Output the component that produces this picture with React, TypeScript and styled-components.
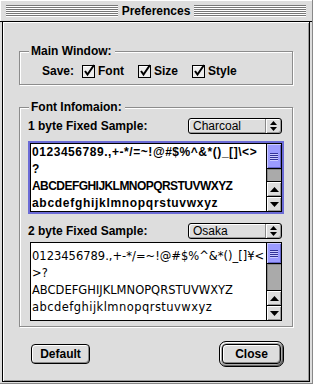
import React, { FC } from "react";
import styled, { createGlobalStyle } from "styled-components";

const GlobalStyle = createGlobalStyle`
  html, body {
    margin: 0;
    padding: 0;
    background: #dddddd;
  }
  body {
    font-family: "Liberation Sans", Arial, sans-serif;
    font-size: 12px;
    color: #000;
  }
`;

const Window = styled.div`
  width: 313px;
  height: 384px;
  box-sizing: border-box;
  background: #dddddd;
  display: flex;
  flex-direction: column;
  border-right: 1px solid #888;
  border-bottom: 1px solid #888;
`;

const TitleBar = styled.div`
  height: 21px;
  flex: none;
  display: flex;
  align-items: center;
  padding: 0 6px 0 6px;
  border-bottom: 1px solid #000;
  background: #dddddd;
  box-shadow: inset 1px 1px 0 #fff;
`;

const Stripes = styled.div`
  flex: 1;
  height: 12px;
  margin-top: 1px;
  background: repeating-linear-gradient(
    to bottom,
    #777 0px,
    #777 1px,
    #fff 1px,
    #fff 2px
  );
`;

const Title = styled.div`
  font-weight: bold;
  font-size: 12px;
  padding: 0 4px;
  white-space: nowrap;
`;

const Panel = styled.div`
  flex: 1;
  margin: 0 2px 1px 2px;
  border: 1px solid #000;
  border-top: none;
  background: #dddddd;
  box-shadow: inset 1px 1px 0 #fff, inset -1px -1px 0 #999;
  display: flex;
  flex-direction: column;
  padding: 29px 16px 0 16px;
`;

const Group = styled.div<{ $height: number; $mt?: number }>`
  position: relative;
  height: ${(p) => p.$height}px;
  margin-top: ${(p) => p.$mt ?? 0}px;
  box-sizing: border-box;
  border: 1px solid #8c8c8c;
  box-shadow: 1px 1px 0 #fff, inset 1px 1px 0 #fff;
`;

const GroupLabel = styled.div`
  position: absolute;
  left: 9px;
  top: -8px;
  padding: 0 3px 0 2px;
  background: #dddddd;
  font-weight: bold;
  line-height: 14px;
`;

const SaveRow = styled.div`
  display: flex;
  align-items: center;
  height: 13px;
  padding: 12px 0 0 22px;
  font-weight: bold;
`;

const SaveLabel = styled.span`
  margin-right: 8px;
`;

const CheckItem = styled.label`
  display: flex;
  align-items: center;
  gap: 2px;
  margin-right: 14px;
`;

const GroupBody = styled.div`
  display: flex;
  flex-direction: column;
  padding: 10px 10px 0 10px;
`;

const SampleRow = styled.div<{ $mt?: number }>`
  display: flex;
  align-items: center;
  justify-content: space-between;
  height: 16px;
  margin-top: ${(p) => p.$mt ?? 0}px;
  font-weight: bold;
`;

const SampleLabel = styled.span`
  margin-left: -2px;
`;

const Popup = styled.div`
  width: 94px;
  height: 16px;
  box-sizing: border-box;
  border: 1px solid #000;
  border-radius: 3px;
  background: #dddddd;
  box-shadow: inset 1px 1px 0 #fff, inset -1px -1px 0 #999;
  display: flex;
  align-items: stretch;
  font-family: "Liberation Sans Narrow", "Liberation Sans", Arial, sans-serif;
  font-weight: normal;
  font-size: 12px;
`;

const PopupText = styled.div`
  flex: 1;
  padding-left: 4px;
  line-height: 14px;
`;

const PopupArrows = styled.div`
  width: 15px;
  border-left: 1px solid #888;
  box-shadow: inset 1px 0 0 #fff;
  display: flex;
  align-items: center;
  justify-content: center;
`;

const TextBox = styled.div<{ $focused?: boolean; $mt: number; $height: number }>`
  margin-top: ${(p) => p.$mt}px;
  height: ${(p) => p.$height}px;
  box-sizing: border-box;
  border: 1px solid #000;
  background: #fff;
  display: flex;
  box-shadow: ${(p) => (p.$focused ? "0 0 0 2px #6b6bd6" : "none")};
`;

const TextArea = styled.div<{ $osaka?: boolean; $pt: number }>`
  flex: 1;
  overflow: hidden;
  padding: ${(p) => p.$pt}px 0 0 1px;
  line-height: 17px;
  white-space: nowrap;
  font-family: ${(p) =>
    p.$osaka ? '"DejaVu Sans", sans-serif' : '"Liberation Sans", Arial, sans-serif'};
  font-weight: ${(p) => (p.$osaka ? "normal" : "bold")};
  font-size: ${(p) => (p.$osaka ? "11.5px" : "12px")};
`;

const Line = styled.div<{ $spacing: number }>`
  letter-spacing: ${(p) => p.$spacing}px;
`;

const ScrollBar = styled.div`
  width: 14px;
  border-left: 1px solid #000;
  display: flex;
  flex-direction: column;
`;

const Thumb = styled.div<{ $h: number }>`
  height: ${(p) => p.$h}px;
  flex: none;
  background: #9c9cff;
  border-bottom: 1px solid #000;
  box-shadow: inset 1px 1px 0 #ccccff, inset -1px -1px 0 #6666cc;
  display: flex;
  flex-direction: column;
  align-items: center;
  justify-content: center;
  gap: 1px;
`;

const Grip = styled.div`
  width: 8px;
  height: 1px;
  background: #333399;
  box-shadow: 0 1px 0 #ccccff;
`;

const Track = styled.div`
  flex: 1;
  background: #aaaaaa;
  box-shadow: inset 1px 1px 0 #888;
`;

const ArrowButton = styled.div`
  height: 14px;
  flex: none;
  border-top: 1px solid #000;
  background: #dddddd;
  box-shadow: inset 1px 1px 0 #fff, inset -1px -1px 0 #999;
  display: flex;
  align-items: center;
  justify-content: center;
`;

const ButtonRow = styled.div`
  display: flex;
  justify-content: space-between;
  align-items: center;
  margin-top: 14px;
  padding: 0 9px 0 12px;
  height: 26px;
`;

const Button = styled.div`
  width: 59px;
  height: 20px;
  box-sizing: border-box;
  border: 1px solid #000;
  border-radius: 4px;
  background: #dddddd;
  box-shadow: inset 1px 1px 0 #fff, inset -1px -1px 0 #888;
  display: flex;
  align-items: center;
  justify-content: center;
  font-weight: bold;
`;

const DefaultRing = styled.div`
  padding: 2px;
  border: 1px solid #000;
  border-radius: 7px;
  background: #aaaaaa;
  box-shadow: inset 1px 1px 0 #fff, inset -1px -1px 0 #666;
`;

const CheckIcon: FC = () => (
  <svg width="14" height="14" viewBox="0 0 14 14" style={{ overflow: "visible" }}>
    <rect x="0.5" y="1.5" width="12" height="12" fill="#eeeeee" stroke="#000" />
    <path d="M1.5 2.5 H11.5" stroke="#fff" />
    <path d="M3 7 L5.5 10.5 L12 1" stroke="#000" strokeWidth="2" fill="none" />
  </svg>
);

const PopupArrowIcon: FC = () => (
  <svg width="7" height="10" viewBox="0 0 7 10">
    <path d="M3.5 0 L7 4 H0 Z" fill="#000" />
    <path d="M0 6 H7 L3.5 10 Z" fill="#000" />
  </svg>
);

const UpArrow: FC = () => (
  <svg width="9" height="5" viewBox="0 0 9 5">
    <path d="M4.5 0 L9 5 H0 Z" fill="#000" />
  </svg>
);

const DownArrow: FC = () => (
  <svg width="9" height="5" viewBox="0 0 9 5">
    <path d="M0 0 H9 L4.5 5 Z" fill="#000" />
  </svg>
);

const Scroller: FC<{ thumb: number }> = ({ thumb }) => (
  <ScrollBar>
    <Thumb $h={thumb}>
      <Grip />
      <Grip />
      <Grip />
      <Grip />
    </Thumb>
    <Track />
    <ArrowButton>
      <UpArrow />
    </ArrowButton>
    <ArrowButton>
      <DownArrow />
    </ArrowButton>
  </ScrollBar>
);

// each line: text and letter spacing tuned to the original font's widths
const sample1: [string, number][] = [
  ["0123456789.,+-*/=~!@#$%^&*()_[]\\<>", 0.55],
  ["?", 0],
  ["ABCDEFGHIJKLMNOPQRSTUVWXYZ", -0.55],
  ["abcdefghijklmnopqrstuvwxyz", 0.7],
];

const sample2: [string, number][] = [
  ["0123456789.,+-*/=~!@#$%^&*()_[]¥<", 0],
  [">?", 0],
  ["ABCDEFGHIJKLMNOPQRSTUVWXYZ", 0],
  ["abcdefghijklmnopqrstuvwxyz", 0.45],
];

const App: FC = () => {
  return (
    <>
      <GlobalStyle />
      <Window>
        <TitleBar>
          <Stripes />
          <Title>Preferences</Title>
          <Stripes />
        </TitleBar>
        <Panel>
          <Group $height={34}>
            <GroupLabel>Main Window:</GroupLabel>
            <SaveRow>
              <SaveLabel>Save:</SaveLabel>
              <CheckItem>
                <CheckIcon />
                Font
              </CheckItem>
              <CheckItem>
                <CheckIcon />
                Size
              </CheckItem>
              <CheckItem>
                <CheckIcon />
                Style
              </CheckItem>
            </SaveRow>
          </Group>
          <Group $height={220} $mt={22}>
            <GroupLabel>Font Infomaion:</GroupLabel>
            <GroupBody>
              <SampleRow>
                <SampleLabel>1 byte Fixed Sample:</SampleLabel>
                <Popup>
                  <PopupText>Charcoal</PopupText>
                  <PopupArrows>
                    <PopupArrowIcon />
                  </PopupArrows>
                </Popup>
              </SampleRow>
              <TextBox $focused $mt={9} $height={69}>
                <TextArea $pt={0}>
                  {sample1.map(([line, sp], i) => (
                    <Line key={i} $spacing={sp}>
                      {line}
                    </Line>
                  ))}
                </TextArea>
                <Scroller thumb={24} />
              </TextBox>
              <SampleRow $mt={11}>
                <SampleLabel>2 byte Fixed Sample:</SampleLabel>
                <Popup>
                  <PopupText>Osaka</PopupText>
                  <PopupArrows>
                    <PopupArrowIcon />
                  </PopupArrows>
                </Popup>
              </SampleRow>
              <TextBox $mt={3} $height={79}>
                <TextArea $osaka $pt={5}>
                  {sample2.map(([line, sp], i) => (
                    <Line key={i} $spacing={sp}>
                      {line}
                    </Line>
                  ))}
                </TextArea>
                <Scroller thumb={20} />
              </TextBox>
            </GroupBody>
          </Group>
          <ButtonRow>
            <Button>Default</Button>
            <DefaultRing>
              <Button>Close</Button>
            </DefaultRing>
          </ButtonRow>
        </Panel>
      </Window>
    </>
  );
};

export default App;
